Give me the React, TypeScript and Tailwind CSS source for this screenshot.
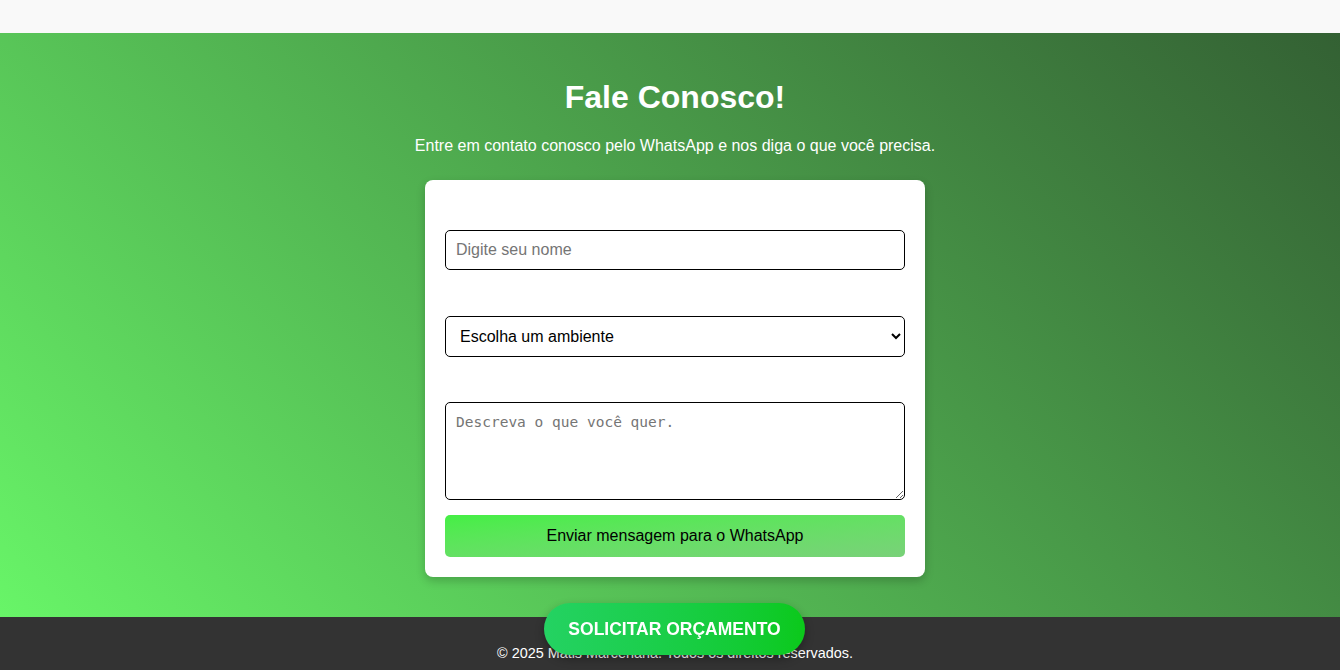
export default function App() {
  return (
    <div className="min-h-screen overflow-hidden bg-[#333333] font-['Liberation_Sans',Arial,sans-serif]">
      <div className="w-[1350px]">
        <header className="h-[33px] bg-[#f9f9f9]" />

        <section className="bg-linear-45 from-[#68f568] to-[#336033] pt-[46px] pb-[40px] flex flex-col items-center text-white">
          <h2 className="text-[32px] leading-[37px] font-bold">Fale Conosco!</h2>
          <p className="mt-[21px] text-base leading-[18px]">
            Entre em contato conosco pelo WhatsApp e nos diga o que você precisa.
          </p>

          <form className="mt-[25px] w-[500px] bg-white rounded-lg p-5 shadow-[0_4px_10px_rgba(0,0,0,0.2)] flex flex-col">
            <input
              type="text"
              placeholder="Digite seu nome"
              className="mt-[30px] h-[40px] px-[10px] border border-black rounded-[5px] text-base text-black placeholder:text-[#757575] outline-none"
            />
            <select
              defaultValue=""
              className="mt-[46px] h-[41px] px-[10px] border border-black rounded-[5px] text-base text-black bg-white outline-none"
            >
              <option value="" disabled>Escolha um ambiente</option>
              <option>Cozinha</option>
              <option>Quarto</option>
              <option>Sala</option>
              <option>Banheiro</option>
            </select>
            <textarea
              placeholder="Descreva o que você quer."
              className="mt-[45px] h-[98px] p-[10px] border border-black rounded-[5px] font-['DejaVu_Sans_Mono',monospace] text-[14.5px] leading-[18px] text-black placeholder:text-[#757575] outline-none"
            />
            <button
              type="button"
              className="mt-[15px] h-[42px] rounded-[5px] bg-linear-to-br from-[#44ef44] to-[#79d179] text-black text-base"
            >
              Enviar mensagem para o WhatsApp
            </button>
          </form>
        </section>

        <footer className="bg-[#333333] pt-[28px] pb-5 text-center text-white text-[14.4px] leading-4">
          <p>© 2025 Matis Marcenaria. Todos os direitos reservados.</p>
        </footer>
      </div>

      <a
        href="#"
        className="fixed bottom-[15px] left-[544px] w-[261px] h-[52px] rounded-full bg-linear-to-r from-[#24d262] to-[#0bc91a] text-white text-[17.5px] font-bold flex items-center justify-center shadow-[0_4px_10px_rgba(0,0,0,0.3)]"
      >
        SOLICITAR ORÇAMENTO
      </a>
    </div>
  );
}
